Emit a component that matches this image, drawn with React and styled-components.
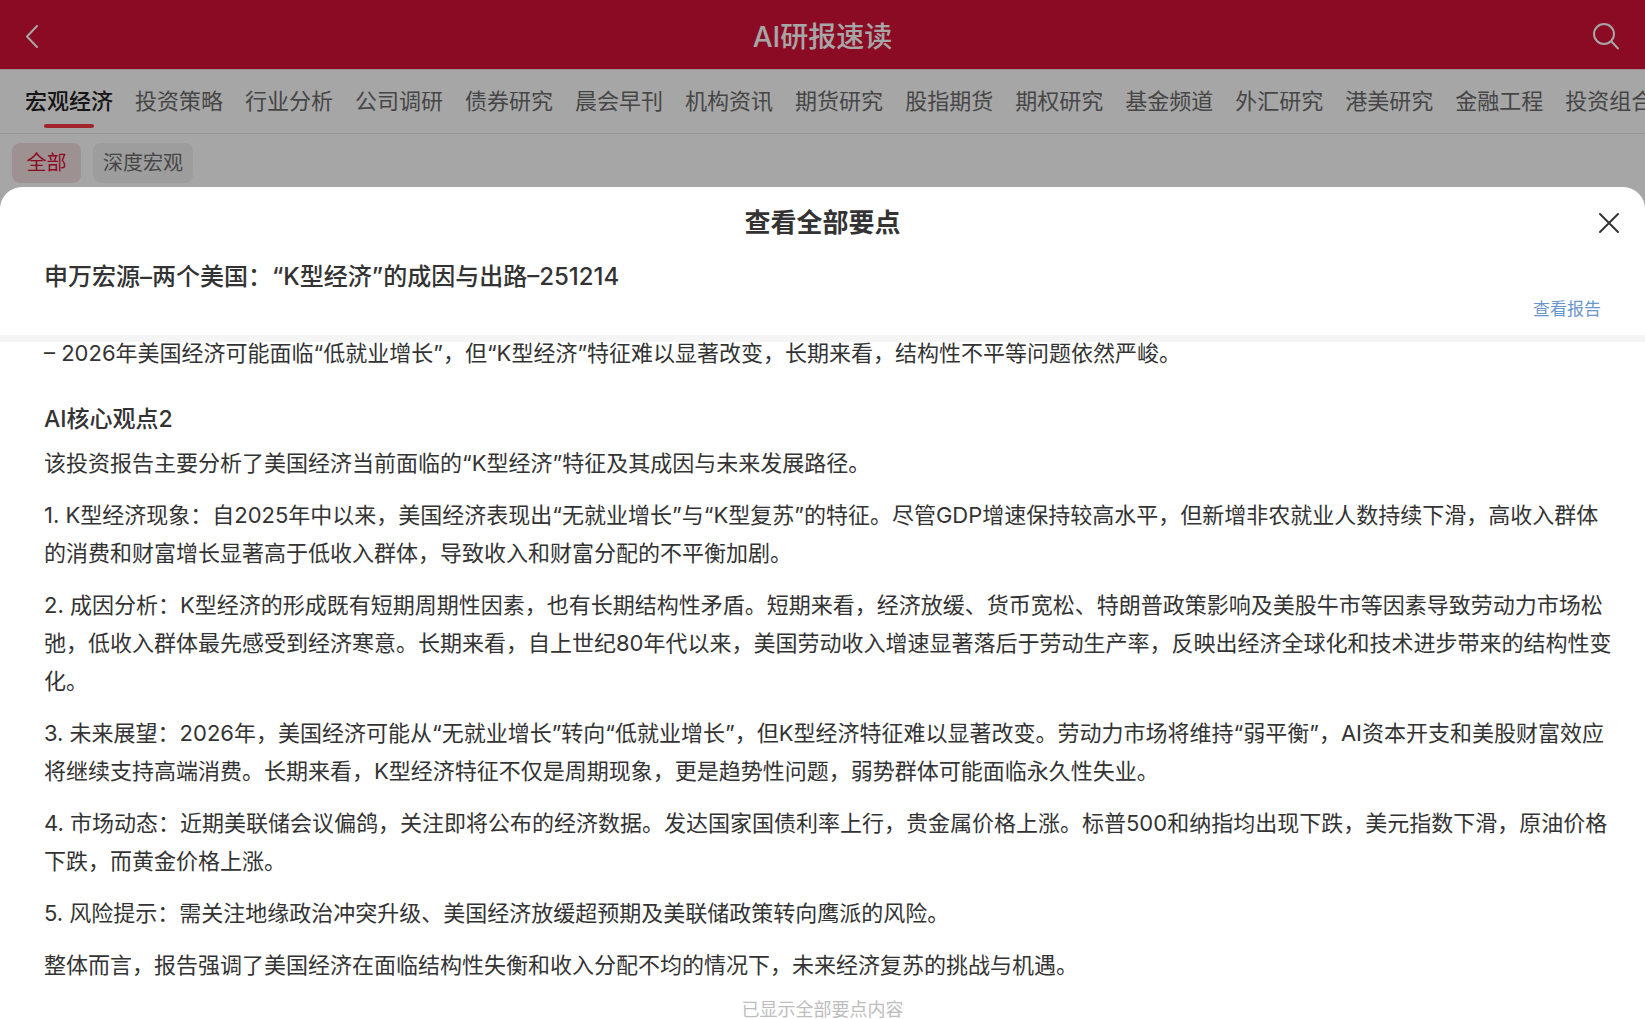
import React, { useState } from "react";
import styled, { createGlobalStyle } from "styled-components";

const GlobalStyle = createGlobalStyle`
  * {
    box-sizing: border-box;
  }

  body {
    margin: 0;
    font-family: Inter, "Noto Sans CJK SC", sans-serif;
    color: #333;
    background-color: white;
  }

  button {
    padding: 0;
    border: none;
    background: none;
    color: inherit;
    font: inherit;
    cursor: pointer;
  }

  h1, h2, h3, p {
    margin: 0;
  }
`;

const Page = styled.div`
  position: relative;
  height: 100vh;
  overflow: hidden;
`;

const Header = styled.header`
  display: flex;
  align-items: center;
  justify-content: space-between;
  height: 70px;
  padding: 4px 24px 0;
  color: white;
  background-color: #d61139;
  border-bottom: 1px solid #f4d4d8;
`;

const HeaderTitle = styled.h1`
  font-size: 28px;
  font-weight: 500;
  line-height: 38px;
`;

const IconButton = styled.button`
  display: flex;
  width: 28px;
  height: 28px;

  svg {
    width: 28px;
    height: 28px;
    fill: none;
    stroke: currentColor;
    stroke-width: 2;
    stroke-linecap: round;
    stroke-linejoin: round;
  }
`;

const TabBar = styled.nav`
  display: flex;
  gap: 22px;
  height: 64px;
  padding: 0 25px;
  overflow: hidden;
  border-bottom: 1px solid #e8e8e8;
`;

const Tab = styled.button`
  display: flex;
  flex-direction: column;
  align-items: center;
  flex-shrink: 0;
  padding-top: 13px;
  font-size: 22px;
  font-weight: ${({ $active }) => ($active ? 500 : 400)};
  line-height: 36px;
  color: ${({ $active }) => ($active ? "#222" : "#6c6c6c")};

  &::after {
    content: "";
    width: 50px;
    height: 4px;
    margin-top: 5px;
    border-radius: 2px;
    background-color: ${({ $active }) => ($active ? "#f83a48" : "transparent")};
  }
`;

const ChipRow = styled.div`
  display: flex;
  gap: 12px;
  padding: 9px 12px;
`;

const Chip = styled.button`
  min-width: 69px;
  height: 40px;
  padding: 0 10px;
  border-radius: 8px;
  font-size: 20px;
  line-height: 40px;
  color: ${({ $active }) => ($active ? "#d61139" : "#6c6c6c")};
  background-color: ${({ $active }) => ($active ? "#f2dfe1" : "#f2f2f2")};
`;

const Overlay = styled.div`
  position: absolute;
  inset: 0;
  display: flex;
  padding-top: 187px;
  background-color: rgba(0, 0, 0, 0.35);
`;

const Sheet = styled.section`
  display: flex;
  flex: 1;
  flex-direction: column;
  min-width: 0;
  background-color: white;
  border-radius: 22px 22px 0 0;
`;

const SheetHeader = styled.div`
  display: grid;
  grid-template-columns: 28px 1fr 28px;
  align-items: center;
  height: 72px;
  padding: 0 22px;
`;

const SheetTitle = styled.h2`
  grid-column: 2;
  font-size: 26px;
  font-weight: 600;
  line-height: 38px;
  text-align: center;
`;

const ReportInfo = styled.div`
  padding: 0 44px 12px;
  border-bottom: 7px solid #f5f5f5;
`;

const ReportTitle = styled.h3`
  font-size: 24px;
  font-weight: 500;
  line-height: 36px;
`;

const ReportLink = styled.a`
  display: block;
  width: fit-content;
  margin-left: auto;
  font-size: 17px;
  line-height: 28px;
  color: #6a96cc;
  text-decoration: none;
`;

const Body = styled.div`
  flex: 1;
  overflow: hidden;
`;

/* 正文初始略微向上滚动 */
const Content = styled.div`
  margin-top: -8px;
  padding: 0 32px 0 44px;
  font-size: 22px;
  line-height: 38px;
`;

const Paragraph = styled.p`
  & + & {
    margin-top: 14px;
  }
`;

const PointTitle = styled.h3`
  margin: 28px 0 6px;
  font-size: 23px;
  font-weight: 500;
`;

const EndNote = styled.p`
  padding-top: 16px;
  font-size: 18px;
  line-height: 20px;
  color: #bdbdbd;
  text-align: center;
`;

const tabs = [
  "宏观经济",
  "投资策略",
  "行业分析",
  "公司调研",
  "债券研究",
  "晨会早刊",
  "机构资讯",
  "期货研究",
  "股指期货",
  "期权研究",
  "基金频道",
  "外汇研究",
  "港美研究",
  "金融工程",
  "投资组合",
];

const chips = ["全部", "深度宏观"];

const paragraphs = [
  "该投资报告主要分析了美国经济当前面临的“K型经济”特征及其成因与未来发展路径。",
  "1. K型经济现象：自2025年中以来，美国经济表现出“无就业增长”与“K型复苏”的特征。尽管GDP增速保持较高水平，但新增非农就业人数持续下滑，高收入群体的消费和财富增长显著高于低收入群体，导致收入和财富分配的不平衡加剧。",
  "2. 成因分析：K型经济的形成既有短期周期性因素，也有长期结构性矛盾。短期来看，经济放缓、货币宽松、特朗普政策影响及美股牛市等因素导致劳动力市场松弛，低收入群体最先感受到经济寒意。长期来看，自上世纪80年代以来，美国劳动收入增速显著落后于劳动生产率，反映出经济全球化和技术进步带来的结构性变化。",
  "3. 未来展望：2026年，美国经济可能从“无就业增长”转向“低就业增长”，但K型经济特征难以显著改变。劳动力市场将维持“弱平衡”，AI资本开支和美股财富效应将继续支持高端消费。长期来看，K型经济特征不仅是周期现象，更是趋势性问题，弱势群体可能面临永久性失业。",
  "4. 市场动态：近期美联储会议偏鸽，关注即将公布的经济数据。发达国家国债利率上行，贵金属价格上涨。标普500和纳指均出现下跌，美元指数下滑，原油价格下跌，而黄金价格上涨。",
  "5. 风险提示：需关注地缘政治冲突升级、美国经济放缓超预期及美联储政策转向鹰派的风险。",
  "整体而言，报告强调了美国经济在面临结构性失衡和收入分配不均的情况下，未来经济复苏的挑战与机遇。",
];

const App = () => {
  const [activeTab, setActiveTab] = useState(tabs[0]);
  const [activeChip, setActiveChip] = useState(chips[0]);

  return (
    <Page lang="zh-CN">
      <GlobalStyle />
      <Header>
        <IconButton aria-label="返回">
          <svg viewBox="0 0 28 28">
            <path d="M13 3 3 13.500 13 24" />
          </svg>
        </IconButton>
        <HeaderTitle>AI研报速读</HeaderTitle>
        <IconButton aria-label="搜索">
          <svg viewBox="0 0 28 28">
            <circle cx="11" cy="11" r="10" />
            <path d="m18.500 18.500 6.500 7" />
          </svg>
        </IconButton>
      </Header>
      <TabBar>
        {tabs.map((tab) => (
          <Tab key={tab} $active={tab === activeTab} onClick={() => setActiveTab(tab)}>
            {tab}
          </Tab>
        ))}
      </TabBar>
      <ChipRow>
        {chips.map((chip) => (
          <Chip key={chip} $active={chip === activeChip} onClick={() => setActiveChip(chip)}>
            {chip}
          </Chip>
        ))}
      </ChipRow>

      <Overlay>
        <Sheet role="dialog" aria-labelledby="sheet-title">
          <SheetHeader>
            <SheetTitle id="sheet-title">查看全部要点</SheetTitle>
            <IconButton aria-label="关闭">
              <svg viewBox="0 0 28 28">
                <path d="m5 5 18 18M23 5 5 23" />
              </svg>
            </IconButton>
          </SheetHeader>
          <ReportInfo>
            <ReportTitle>申万宏源–两个美国：“K型经济”的成因与出路–251214</ReportTitle>
            <ReportLink href="#report">查看报告</ReportLink>
          </ReportInfo>
          <Body>
            <Content>
              <Paragraph>
                – 2026年美国经济可能面临“低就业增长”，但“K型经济”特征难以显著改变，长期来看，结构性不平等问题依然严峻。
              </Paragraph>
              <PointTitle>AI核心观点2</PointTitle>
              {paragraphs.map((text) => (
                <Paragraph key={text}>{text}</Paragraph>
              ))}
            </Content>
            <EndNote>已显示全部要点内容</EndNote>
          </Body>
        </Sheet>
      </Overlay>
    </Page>
  );
};

export default App;
